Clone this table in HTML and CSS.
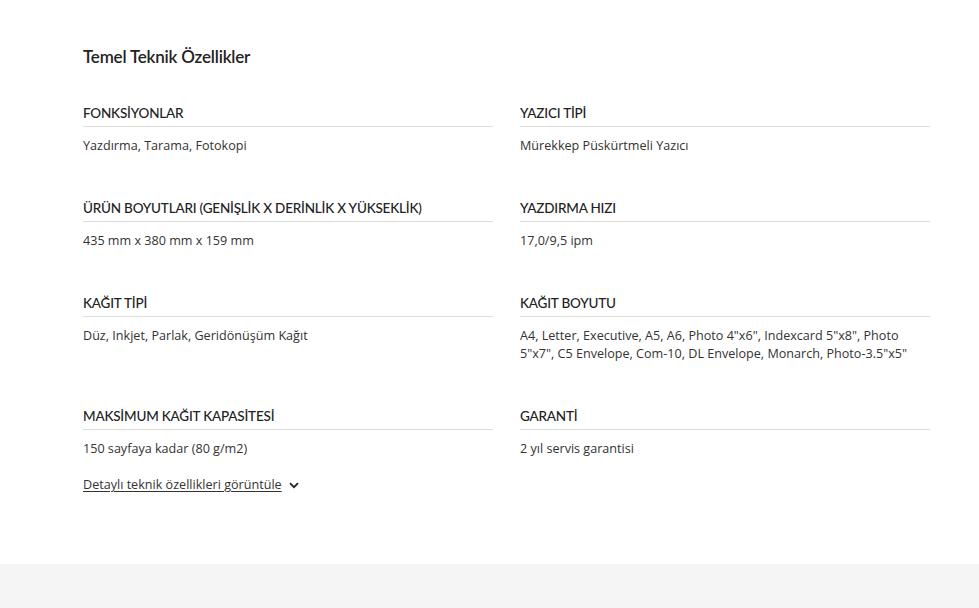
FILE: index.html
```html
<!DOCTYPE html>
<html lang="tr">
  <head>
    <meta charset="utf-8">
    <title>Temel Teknik Özellikler</title>
    <link rel="stylesheet" href="styles.css">
  </head>
  <body>
    <section class="specs">
      <h2 class="specs-title">Temel Teknik Özellikler</h2>
      <div class="specs-grid">
        <div class="spec">
          <h3 class="spec-label">Fonksİyonlar</h3>
          <p class="spec-value">Yazdırma, Tarama, Fotokopi</p>
        </div>
        <div class="spec">
          <h3 class="spec-label">Yazıcı Tİpİ</h3>
          <p class="spec-value">Mürekkep Püskürtmeli Yazıcı</p>
        </div>
        <div class="spec">
          <h3 class="spec-label">Ürün Boyutları (Genİşlİk x Derİnlİk x Yükseklİk)</h3>
          <p class="spec-value">435 mm x 380 mm x 159 mm</p>
        </div>
        <div class="spec">
          <h3 class="spec-label">Yazdırma Hızı</h3>
          <p class="spec-value">17,0/9,5 ipm</p>
        </div>
        <div class="spec">
          <h3 class="spec-label">Kağıt Tİpİ</h3>
          <p class="spec-value">Düz, Inkjet, Parlak, Geridönüşüm Kağıt</p>
        </div>
        <div class="spec">
          <h3 class="spec-label">Kağıt Boyutu</h3>
          <p class="spec-value">A4, Letter, Executive, A5, A6, Photo 4"x6", Indexcard 5"x8", Photo 5"x7", C5 Envelope, Com-10, DL Envelope, Monarch, Photo-3.5"x5"</p>
        </div>
        <div class="spec">
          <h3 class="spec-label">Maksİmum Kağıt Kapasİtesİ</h3>
          <p class="spec-value">150 sayfaya kadar (80 g/m2)</p>
        </div>
        <div class="spec">
          <h3 class="spec-label">Garantİ</h3>
          <p class="spec-value">2 yıl servis garantisi</p>
        </div>
      </div>
      <a class="specs-more" href="#">Detaylı teknik özellikleri görüntüle
        <svg class="chevron" width="10" height="7" viewBox="0 0 10 7"><path d="M1 1.2 L5 5.2 L9 1.2" fill="none" stroke="#222" stroke-width="1.8"/></svg>
      </a>
    </section>
    <footer class="page-foot"></footer>
  </body>
</html>
```

FILE: styles.css
```css
html { background: #fff; }
body { margin: 0; color: #333; font-family: "Open Sans", "Noto Sans", sans-serif; font-size: 12.6px; }

.specs { width: 847px; margin: 0 0 0 83px; padding: 45px 0 70px; }
.specs-title { margin: 0 0 34px; font-family: Lato, "Noto Sans", sans-serif; font-weight: 600; font-size: 17px; line-height: 24px; color: #222; letter-spacing: -0.2px; }

.specs-grid { display: grid; grid-template-columns: 410px 410px; column-gap: 27px; row-gap: 43px; }
.spec-label { margin: 0; padding-bottom: 3px; border-bottom: 1px solid #ddd; font-family: Lato, "Noto Sans", sans-serif; font-weight: 500; font-size: 13.5px; line-height: 20px; text-transform: uppercase; color: #222; letter-spacing: -0.2px; }
.spec-value { margin: 10px 0 0; line-height: 18px; color: #333; }

.specs-more { display: inline-flex; align-items: center; gap: 7px; margin-top: 18px; color: #333; text-decoration: underline; text-underline-offset: 2px; line-height: 18px; }
.chevron { margin-top: 1px; }

.page-foot { height: 44px; background: #f5f5f5; }
```
